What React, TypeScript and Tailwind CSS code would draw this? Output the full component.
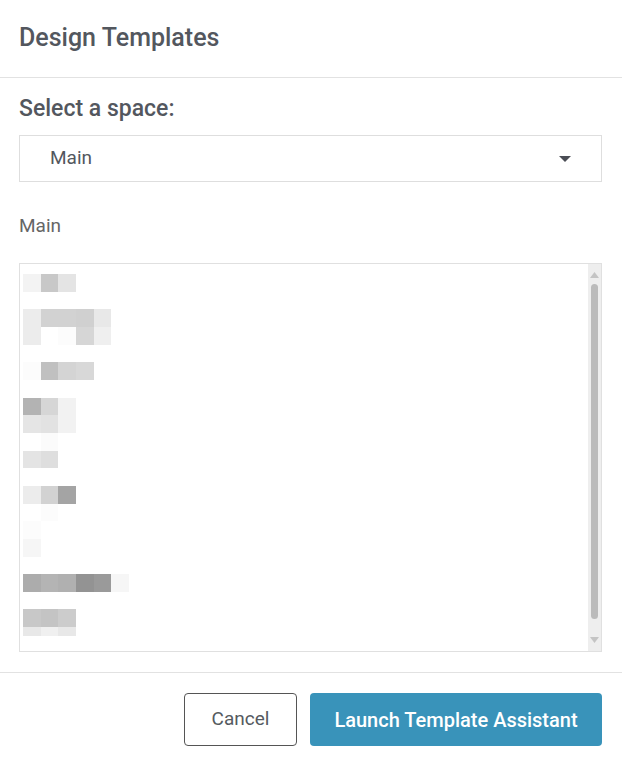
const mosaic: { h: number; cells: string[] }[] = [
  { h: 17.67, cells: ["#f3f3f3", "#c8c8c8", "#e4e4e4"] },
  { h: 17.67, cells: [] },
  { h: 17.67, cells: ["#ececec", "#d2d2d2", "#d2d2d2", "#d0d0d0", "#e8e8e8"] },
  { h: 17.67, cells: ["#ececec", "#ffffff", "#fcfcfc", "#d6d6d6", "#efefef"] },
  { h: 17.67, cells: [] },
  { h: 17.67, cells: ["#fcfcfc", "#c0c0c0", "#d4d4d4", "#d8d8d8"] },
  { h: 17.67, cells: [] },
  { h: 17.67, cells: ["#b3b3b3", "#d6d6d6", "#f2f2f2"] },
  { h: 17.67, cells: ["#e5e5e5", "#e2e2e2", "#f2f2f2"] },
  { h: 17.67, cells: ["#ffffff", "#fbfbfb"] },
  { h: 17.67, cells: ["#e4e4e4", "#dedede"] },
  { h: 17.67, cells: [] },
  { h: 17.67, cells: ["#ececec", "#d2d2d2", "#a4a4a4"] },
  { h: 17.67, cells: ["#ffffff", "#fcfcfc"] },
  { h: 17.67, cells: ["#fcfcfc"] },
  { h: 17.67, cells: ["#f6f6f6"] },
  { h: 17.67, cells: [] },
  { h: 17.67, cells: ["#acacac", "#b4b4b4", "#b0b0b0", "#939393", "#9a9a9a", "#f6f6f6"] },
  { h: 17.67, cells: [] },
  { h: 17.67, cells: ["#c8c8c8", "#c4c4c4", "#cccccc"] },
  { h: 9, cells: ["#e8e8e8", "#f0f0f0", "#e8e8e8"] },
];

function Scrollbar() {
  return (
    <div className="flex w-[13px] flex-col items-center bg-[#eeeeee]">
      <svg width="9" height="6" viewBox="0 0 9 6" className="mt-[8px]">
        <path d="M4.5 0L9 6H0z" fill="#c4c4c4" />
      </svg>
      <div className="mt-[6px] w-[7px] h-[335px] rounded-full bg-[#bbbbbb]" />
      <svg width="9" height="6" viewBox="0 0 9 6" className="mt-[18px]">
        <path d="M0 0h9L4.5 6z" fill="#c4c4c4" />
      </svg>
    </div>
  );
}

export default function App() {
  return (
    <div className="w-[622px] h-[764px] bg-white text-[#53575e] font-['Roboto',sans-serif] flex flex-col">
      {/* header */}
      <div className="h-[78px] flex items-center px-[19px] border-b border-[#e2e2e2]">
        <h1 className="text-[25px] font-medium leading-none -mt-[2px]">Design Templates</h1>
      </div>

      {/* body */}
      <div className="flex-1 pl-[19px] pr-[20px] pt-[17px]">
        <div className="text-[23px] font-medium leading-[28px]">Select a space:</div>
        <div className="mt-[12px] h-[47px] border border-[#dedede] flex items-center pl-[30px] pr-[30px]">
          <span className="flex-1 text-[19px]">Main</span>
          <svg width="12" height="6" viewBox="0 0 12 6">
            <path d="M0 0h12L6 6z" fill="#4a4d55" />
          </svg>
        </div>

        <div className="mt-[32px] text-[19px] leading-[24px] text-[#666666]">Main</div>

        <div className="mt-[25px] h-[389px] border border-[#e0e0e0] flex">
          <div className="flex-1 pl-[3px] pt-[10px]">
            {mosaic.map((row, i) => (
              <div key={i} className="flex" style={{ height: row.h }}>
                {row.cells.map((c, j) => (
                  <div key={j} className="w-[17.67px] h-full" style={{ backgroundColor: c }} />
                ))}
              </div>
            ))}
          </div>
          <Scrollbar />
        </div>
      </div>

      {/* footer */}
      <div className="h-[92px] border-t border-[#e2e2e2] flex items-start justify-end gap-[13px] pr-[20px] pt-[20px]">
        <button className="w-[113px] h-[53px] rounded-[4px] border border-[#555555] text-[19px] text-[#555a60] bg-white">
          Cancel
        </button>
        <button className="w-[292px] h-[53px] rounded-[4px] bg-[#3993ba] text-[20px] text-white font-medium">
          Launch Template Assistant
        </button>
      </div>
    </div>
  );
}
